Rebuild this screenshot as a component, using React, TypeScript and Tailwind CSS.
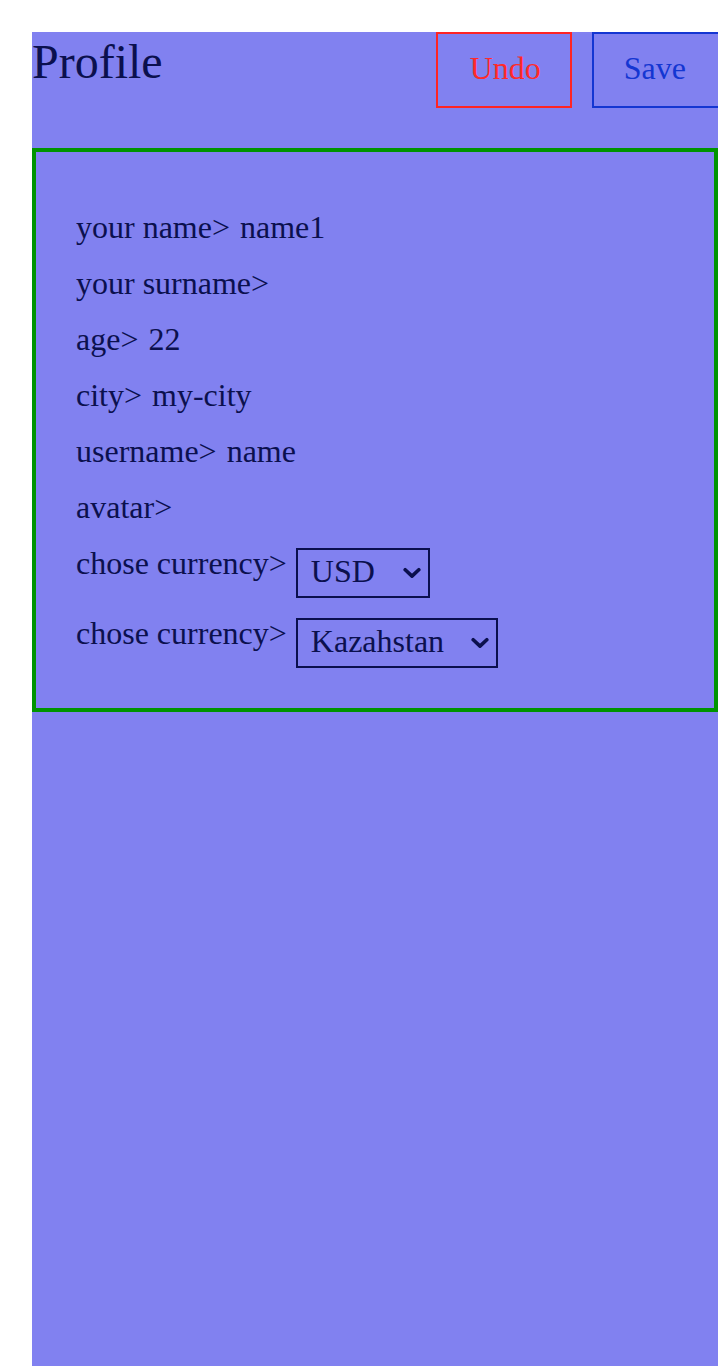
import { useState } from 'react';

function Chevron() {
  return (
    <svg
      width="18"
      height="11"
      viewBox="0 0 18 11"
      className="pointer-events-none absolute right-[9px] top-1/2 -translate-y-1/2"
    >
      <path d="M2.2 2.2 L9 8.6 L15.8 2.2" fill="none" stroke="#0b104e" strokeWidth="3.6" strokeLinecap="round" strokeLinejoin="round" />
    </svg>
  );
}

function Picker({ value, options, width, onChange }: { value: string; options: string[]; width: string; onChange: (v: string) => void }) {
  return (
    <div className="relative mt-[4px]">
      <select
        value={value}
        onChange={e => onChange(e.target.value)}
        className={`${width} h-[50px] appearance-none border-2 border-[#0b104e] bg-transparent pb-[4px] pl-[13px] leading-[37px] text-[#0b104e] outline-none`}
      >
        {options.map(o => (
          <option key={o} value={o}>{o}</option>
        ))}
      </select>
      <Chevron />
    </div>
  );
}

const fields = [
  { label: 'your name>', value: 'name1' },
  { label: 'your surname>', value: '' },
  { label: 'age>', value: '22' },
  { label: 'city>', value: 'my-city' },
  { label: 'username>', value: 'name' },
  { label: 'avatar>', value: '' },
];

export default function App() {
  const [currency, setCurrency] = useState('USD');
  const [country, setCountry] = useState('Kazahstan');

  return (
    <div className="min-h-[1366px] overflow-hidden bg-white pl-[32px] pt-[32px] font-['Liberation_Serif',serif] text-[#0b104e]">
      <div className="min-h-[1334px] bg-[#8181f0]">
        {/* header */}
        <div className="flex items-start">
          <h1 className="flex-1 pt-[2px] text-[48px] leading-[55px] font-normal">Profile</h1>
          <div className="-mr-[2px] flex gap-[20px]">
            <button className="w-[136px] border-2 border-[#ff2424] pl-[3px] pt-[16px] pb-[19px] text-[32px] leading-[37px] text-[#ff2a2a]">
              Undo
            </button>
            <button className="border-2 border-[#1436d2] pl-[30px] pr-[32px] pt-[16px] pb-[19px] text-[32px] leading-[37px] text-[#1436d2]">
              Save
            </button>
          </div>
        </div>

        {/* profile form */}
        <div className="mt-[40px] border-4 border-[#009400] pl-[40px] pt-[56px] pb-[43px] text-[32px] leading-[37px]">
          <div className="flex flex-col gap-[19px]">
            {fields.map(f => (
              <div key={f.label} className="flex h-[37px] gap-[10px] pt-[1px]">
                <span>{f.label}</span>
                {f.value && <span>{f.value}</span>}
              </div>
            ))}
            <div className="flex h-[51px] items-start gap-[9px]">
              <span className="pt-[1px]">chose currency&gt;</span>
              <Picker value={currency} options={['USD', 'EUR', 'KZT']} width="w-[134px]" onChange={setCurrency} />
            </div>
            <div className="flex h-[51px] items-start gap-[9px]">
              <span className="pt-[1px]">chose currency&gt;</span>
              <Picker value={country} options={['Kazahstan', 'Russia', 'USA']} width="w-[202px]" onChange={setCountry} />
            </div>
          </div>
        </div>
      </div>
    </div>
  );
}
